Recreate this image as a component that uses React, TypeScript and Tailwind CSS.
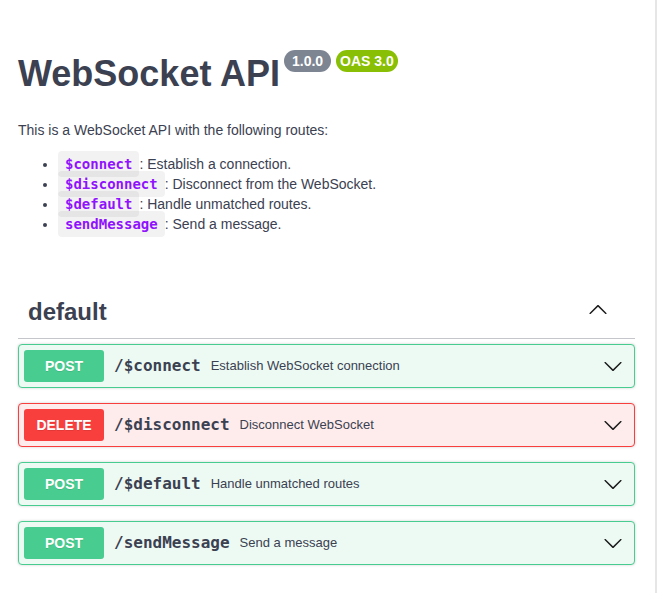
const ROUTES = [
  { name: '$connect', text: ': Establish a connection.' },
  { name: '$disconnect', text: ': Disconnect from the WebSocket.' },
  { name: '$default', text: ': Handle unmatched routes.' },
  { name: 'sendMessage', text: ': Send a message.' },
]

type Method = 'POST' | 'DELETE'

const METHOD_STYLE: Record<Method, { block: string; badge: string }> = {
  POST: { block: 'border-[#49cc90] bg-[#edfaf4]', badge: 'bg-[#49cc90]' },
  DELETE: { block: 'border-[#f93e3e] bg-[#feecec]', badge: 'bg-[#f93e3e]' },
}

const OPS: { method: Method; path: string; summary: string }[] = [
  { method: 'POST', path: '/$connect', summary: 'Establish WebSocket connection' },
  { method: 'DELETE', path: '/$disconnect', summary: 'Disconnect WebSocket' },
  { method: 'POST', path: '/$default', summary: 'Handle unmatched routes' },
  { method: 'POST', path: '/sendMessage', summary: 'Send a message' },
]

const MONO = "font-['DejaVu_Sans_Mono',Menlo,monospace]"

function Arrow({ up }: { up?: boolean }) {
  return (
    <svg width="20" height="20" viewBox="0 0 20 20" className={up ? 'rotate-180' : ''} fill="#1b1b1b">
      <path d="M17.418 6.109c.272-.268.709-.268.979 0s.271.701 0 .969l-7.908 7.83c-.27.268-.707.268-.979 0l-7.908-7.83c-.27-.268-.27-.701 0-.969.271-.268.709-.268.979 0L10 13.25l7.418-7.141z" />
    </svg>
  )
}

function Operation({ method, path, summary }: { method: Method; path: string; summary: string }) {
  const style = METHOD_STYLE[method]
  return (
    <div
      className={`flex items-center rounded-[4px] border p-[5px] shadow-[0_0_3px_rgba(0,0,0,0.19)] ${style.block}`}
    >
      <span
        className={`w-[80px] rounded-[3px] py-[6px] text-center text-[14px] leading-[20px] font-bold text-white [text-shadow:0_1px_0_rgba(0,0,0,0.1)] ${style.badge}`}
      >
        {method}
      </span>
      <span className={`px-[10px] text-[16px] leading-[20px] font-bold ${MONO}`}>{path}</span>
      <span className="text-[13px] leading-[20px]">{summary}</span>
      <span className="mr-[6px] ml-auto flex">
        <Arrow />
      </span>
    </div>
  )
}

export default function App() {
  return (
    <div className="h-[593px] w-[657px] border-r-2 border-[#e6e6e6] bg-white font-['Liberation_Sans',Arial,sans-serif] text-[#3b4151]">
      <div className="ml-[18px] w-[617px]">
        <div className="flex items-start pt-[53px]">
          <h2 className="text-[36px] leading-[41px] font-bold">WebSocket API</h2>
          <div className="-mt-[3px] ml-[4px] flex gap-[5px]">
            <span className="rounded-full bg-[#7d8492] px-[4px] py-[3px] text-[14px] leading-[16px] font-bold whitespace-pre text-white">
              {' 1.0.0 '}
            </span>
            <span className="rounded-full bg-[#89bf04] px-[4px] py-[3px] text-[14px] leading-[16px] font-bold text-white">
              OAS 3.0
            </span>
          </div>
        </div>

        <p className="mt-[26px] text-[14px] leading-[20px]">This is a WebSocket API with the following routes:</p>
        <ul className="mt-[14px] list-disc pl-[40px] text-[14px] leading-[20px]">
          {ROUTES.map((r) => (
            <li key={r.name}>
              <code
                className={`rounded-[4px] bg-[rgba(0,0,0,0.05)] px-[7px] py-[5px] text-[14px] font-semibold text-[#9012fe] ${MONO}`}
              >
                {r.name}
              </code>
              {r.text}
            </li>
          ))}
        </ul>

        <div className="mt-[55px] flex items-center justify-between border-b border-[#c4c6cb] pt-[8px] pr-[20px] pb-[12px] pl-[10px]">
          <h3 className="text-[24px] leading-[29px] font-bold">default</h3>
          <span className="mr-[7px] mb-[4px] flex">
            <Arrow up />
          </span>
        </div>

        <div className="mt-[5px] flex flex-col gap-[15px]">
          {OPS.map((op) => (
            <Operation key={op.path} {...op} />
          ))}
        </div>
      </div>
    </div>
  )
}
